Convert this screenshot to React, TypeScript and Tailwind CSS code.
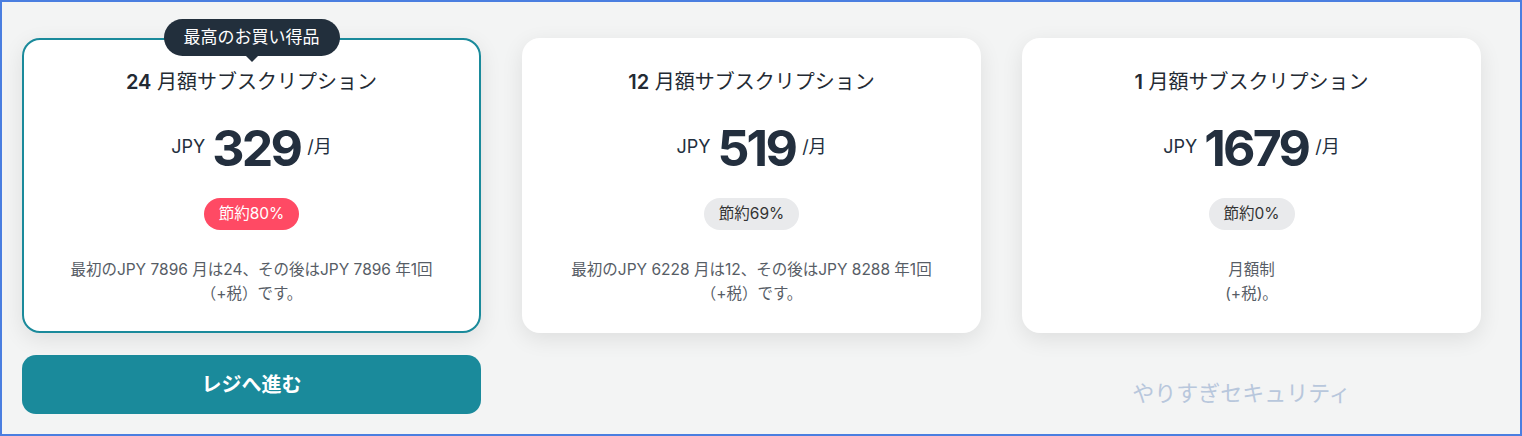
import React from "react";

const font = { fontFamily: 'Inter, "Noto Sans CJK JP", "Noto Sans", sans-serif' };

type Plan = {
  months: string;
  price: string;
  save: string;
  best?: boolean;
  desc: React.ReactNode;
};

const plans: Plan[] = [
  {
    months: "24",
    price: "329",
    save: "節約80%",
    best: true,
    desc: (
      <>
        最初のJPY 7896 月は24、その後はJPY 7896 年1回
        <br />（+税）です。
      </>
    ),
  },
  {
    months: "12",
    price: "519",
    save: "節約69%",
    desc: (
      <>
        最初のJPY 6228 月は12、その後はJPY 8288 年1回
        <br />（+税）です。
      </>
    ),
  },
  {
    months: "1",
    price: "1679",
    save: "節約0%",
    desc: (
      <>
        月額制
        <br />
        (+税)。
      </>
    ),
  },
];

function Card({ p }: { p: Plan }) {
  return (
    <div
      className={
        "relative flex flex-col items-center rounded-[18px] bg-white h-[295px] pt-[32px] shadow-[0_6px_22px_rgba(0,0,0,0.09)] " +
        (p.best ? "border-2 border-[#1a8a9b]" : "")
      }
    >
      {p.best && (
        <div className="absolute left-1/2 top-[-21px] -translate-x-1/2 flex flex-col items-center">
          <div className="h-[37px] px-[20px] rounded-full bg-[#222f3c] text-white text-[17px] flex items-center whitespace-nowrap">
            最高のお買い得品
          </div>
          <div className="w-0 h-0 border-l-[6px] border-r-[6px] border-t-[6px] border-l-transparent border-r-transparent border-t-[#222f3c]" />
        </div>
      )}
      <div className={"text-[20px] leading-[24px] text-[#232a33] " + (p.best ? "-mt-[2px]" : "")}>
        <span className="font-semibold">{p.months}</span> 月額サブスクリプション
      </div>
      <div className="mt-[30px] flex items-center gap-[7px] h-[48px] text-[#232f3e]">
        <span className="text-[18px] -mt-[4px]">JPY</span>
        <span className="text-[50px] leading-none font-bold tracking-[-0.055em]">{p.price}</span>
        <span className="text-[18px] -mt-[4px]">/月</span>
      </div>
      <div
        className={
          "mt-[26px] h-[32px] px-[15px] rounded-full flex items-center text-[15.5px] " +
          (p.best ? "bg-[#ff4a64] text-white" : "bg-[#e9eaec] text-[#333]")
        }
      >
        {p.save}
      </div>
      <div className="mt-[28px] text-[15.5px] leading-[24px] text-[#575d66] text-center">{p.desc}</div>
    </div>
  );
}

export default function App() {
  return (
    <div
      style={font}
      className="w-[1522px] h-[436px] border-2 border-[#4a7ee0] bg-[#f3f4f4] pl-[20px] pt-[36px] box-border"
    >
      <div className="grid grid-cols-[459px_459px_459px] gap-x-[41px]">
        <div className="flex flex-col">
          <Card p={plans[0]} />
          <button className="mt-[22px] h-[59px] rounded-[14px] bg-[#1a8a9b] text-white text-[20px] font-bold">
            レジへ進む
          </button>
        </div>
        <div className="flex flex-col">
          <Card p={plans[1]} />
        </div>
        <div className="flex flex-col">
          <Card p={plans[2]} />
          <div className="mt-[44px] pr-[20px] text-center text-[22px] text-[#b8c7dc]">やりすぎセキュリティ</div>
        </div>
      </div>
    </div>
  );
}
